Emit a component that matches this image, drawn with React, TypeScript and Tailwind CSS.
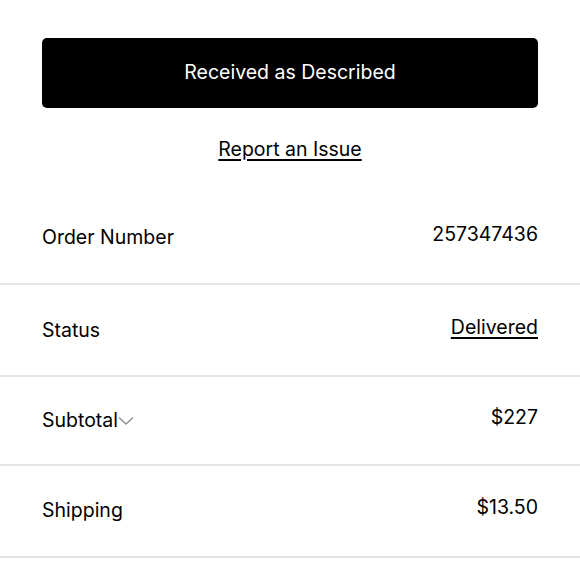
import React from "react";

function Chevron() {
  return (
    <svg width="16" height="10" viewBox="0 0 16 10" fill="none" className="mt-[2px]">
      <path d="M1.5 2 L8 8 L14.5 2" stroke="#8c8c8c" strokeWidth="1.4" strokeLinecap="round" strokeLinejoin="round" />
    </svg>
  );
}

function Row({ label, value, underline, chevron, h, pt }: { label: string; value: string; underline?: boolean; chevron?: boolean; h: string; pt: string }) {
  return (
    <div className={`flex ${h} ${pt} items-start justify-between border-b-2 border-[#e4e4e4] px-[42px]`}>
      <div className="mt-[3px] flex items-center leading-[24px]">
        <span>{label}</span>
        {chevron && <Chevron />}
      </div>
      <span className={underline ? "leading-[24px] underline underline-offset-[3px] decoration-[1.5px]" : "leading-[24px]"}>{value}</span>
    </div>
  );
}

export default function App() {
  return (
    <div className="min-h-[580px] w-[580px] bg-white text-[19.5px] text-black" style={{ fontFamily: "Inter, 'Noto Sans', sans-serif" }}>
      <div className="px-[42px] pt-[38px]">
        <button className="flex h-[70px] w-full items-center justify-center rounded-[5px] bg-black text-[19.5px] text-white">
          Received as Described
        </button>
        <div className="mt-[29px] flex justify-center">
          <span className="leading-[24px] underline underline-offset-[3px] decoration-[1.5px]">Report an Issue</span>
        </div>
      </div>
      <div className="mt-[30px]">
        <Row h="h-[94px]" pt="pt-[31px]" label="Order Number" value="257347436" />
        <Row h="h-[92px]" pt="pt-[30px]" label="Status" value="Delivered" underline />
        <Row h="h-[89px]" pt="pt-[28px]" label="Subtotal" value="$227" chevron />
        <Row h="h-[92px]" pt="pt-[29px]" label="Shipping" value="$13.50" />
      </div>
    </div>
  );
}
